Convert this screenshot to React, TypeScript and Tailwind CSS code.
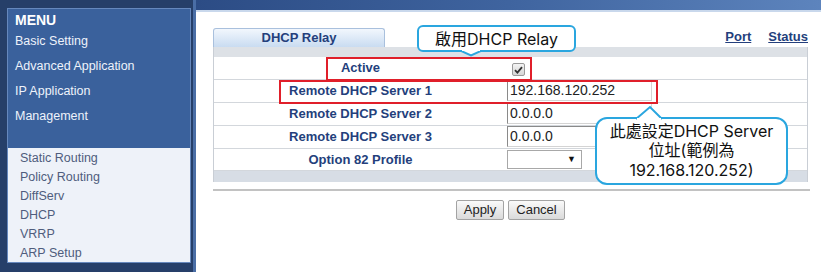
const topMenu = ["Basic Setting", "Advanced Application", "IP Application", "Management"];
const subMenu = ["Static Routing", "Policy Routing", "DiffServ", "DHCP", "VRRP", "ARP Setup"];

const Sidebar = () => {
  return (
    <div className="w-[196px] h-[272px] bg-[#263f69] pt-[8px] pl-[7px] border-r-[3px] border-[#4a6ea6]">
      <div className="w-[184px] border border-[#6688bd]">
        <div className="h-[139px] bg-[#3a619c] pl-[7px] pt-[3px]">
          <div className="text-[14px] font-bold text-white leading-[17px]">MENU</div>
          {topMenu.map((item) => (
            <div key={item} className="h-[25px] leading-[25px] text-[12.5px] text-[#eef3fb] first:h-[24px] first:leading-[20px]">
              {item}
            </div>
          ))}
        </div>
        <div className="h-[114px] bg-[#eef2f9] pl-[12px] pt-[1px]">
          {subMenu.map((item) => (
            <div key={item} className="h-[19px] leading-[19px] text-[12.5px] text-[#4f5d7d]">
              {item}
            </div>
          ))}
        </div>
      </div>
    </div>
  );
};

const TextBox = ({ value, width = "w-[145px]" }: { value: string; width?: string }) => (
  <div className={`${width} h-[21px] bg-white border border-t-[#8a8a8a] border-l-[#8a8a8a] border-r-[#d4d4d4] border-b-[#d4d4d4] pl-[2px] text-[14px] leading-[19px] text-[#222]`}>
    {value}
  </div>
);

const Row = ({ label, children, h }: { label: string; children: React.ReactNode; h: string }) => (
  <div className={`flex ${h} border-b border-[#d3d7dc]`}>
    <div className="w-[293px] flex items-center justify-center text-[13px] font-bold text-[#243f7c]">{label}</div>
    <div className="flex-1 flex items-start">{children}</div>
  </div>
);

export default function App() {
  return (
    <div className="relative w-[821px] h-[272px] bg-white flex overflow-hidden" style={{ fontFamily: '"Liberation Sans", Arial, sans-serif' }}>
      <Sidebar />
      <div className="flex-1 flex flex-col">
        <div className="h-[10px] bg-gradient-to-r from-[#2c4c85] via-[#3f649f] to-[#5d84bd]" />
        <div className="h-[2px] bg-[#c9d8ec]" />
        <div className="pl-[17px] pt-[16px] w-[612px]">
          <div className="flex items-end justify-between h-[19px]">
            <div className="w-[172px] h-[19px] rounded-t-[3px] border border-b-0 border-[#a9c0dd] bg-gradient-to-b from-[#f2f7fd] to-[#c9dcf1] text-center text-[13px] font-bold text-[#243f7c] leading-[18px]">
              DHCP Relay
            </div>
            <div className="flex gap-[17px] text-[13px] font-bold text-[#243f7c] underline leading-[15px] pb-[3px]">
              <span>Port</span>
              <span>Status</span>
            </div>
          </div>
          <div className="w-[595px] border-x border-[#c9ced5]">
            <div className="h-[10px] bg-[#dde1e6]" />
            <Row label="Active" h="h-[23px]">
              <div className="ml-[5px] mt-[6px] w-[13px] h-[13px] rounded-[2px] border border-[#9a9a9a] bg-gradient-to-b from-[#f4f4f4] to-[#d6d6d6] flex items-center justify-center">
                <svg width="9" height="8" viewBox="0 0 9 8">
                  <path d="M1 4.2 L3.4 6.6 L8 1.2" fill="none" stroke="#333" strokeWidth="1.8" />
                </svg>
              </div>
            </Row>
            <Row label="Remote DHCP Server 1" h="h-[23px]">
              <TextBox value="192.168.120.252" />
            </Row>
            <Row label="Remote DHCP Server 2" h="h-[23px]">
              <TextBox value="0.0.0.0" />
            </Row>
            <Row label="Remote DHCP Server 3" h="h-[23px]">
              <TextBox value="0.0.0.0" />
            </Row>
            <Row label="Option 82 Profile" h="h-[22px]">
              <div className="mt-[1px] w-[75px] h-[19px] bg-white border border-[#a8a8a8] flex items-center justify-end pr-[5px] text-[9px] text-[#111]">
                ▼
              </div>
            </Row>
            <div className="h-[11px] bg-[#d7dde5]" />
          </div>
          <div className="w-[597px] h-[2px] bg-[#c2c2c2] mt-[7px]" />
          <div className="w-[595px] flex justify-center gap-[4px] mt-[9px]">
            <button className="w-[48px] h-[20px] border border-[#a3a3a3] rounded-[2px] bg-gradient-to-b from-[#fafafa] to-[#dadada] text-[13px] text-[#222] leading-[18px]">
              Apply
            </button>
            <button className="w-[57px] h-[20px] border border-[#a3a3a3] rounded-[2px] bg-gradient-to-b from-[#fafafa] to-[#dadada] text-[13px] text-[#222] leading-[18px]">
              Cancel
            </button>
          </div>
        </div>
      </div>

      {/* annotation overlays */}
      <div className="absolute left-[326px] top-[57px] w-[206px] h-[24px] border-2 border-[#e01f2a]" />
      <div className="absolute left-[279px] top-[80px] w-[379px] h-[24px] border-2 border-[#e01f2a]" />

      <div
        className="absolute left-[417px] top-[25px] w-[159px] h-[27px] rounded-[6px] border-2 border-[#2aa6df] bg-white flex items-center justify-center text-[16px] text-[#111]"
        style={{ fontFamily: 'Inter, "Noto Sans CJK TC", sans-serif' }}
      >
        啟用DHCP Relay
        <svg className="absolute left-[42px] top-[23px]" width="20" height="7" viewBox="0 0 20 7">
          <path d="M0 1 L10 5.5 L20 1" fill="white" stroke="#2aa6df" strokeWidth="2" />
          <rect x="1" y="-1" width="18" height="2" fill="white" />
        </svg>
      </div>

      <div
        className="absolute left-[595px] top-[117px] w-[193px] h-[68px] rounded-[12px] border-2 border-[#2aa6df] bg-white flex flex-col items-center justify-center text-[16px] leading-[19.5px] text-[#111]"
        style={{ fontFamily: 'Inter, "Noto Sans CJK TC", sans-serif' }}
      >
        <span>此處設定DHCP Server</span>
        <span>位址(範例為</span>
        <span>192.168.120.252)</span>
        <svg className="absolute left-[38px] top-[-14px]" width="28" height="16" viewBox="0 0 28 16">
          <path d="M1 14 L15 2 L27 14" fill="white" stroke="#2aa6df" strokeWidth="2" />
          <rect x="2" y="13" width="24" height="4" fill="white" />
        </svg>
      </div>
    </div>
  );
}
